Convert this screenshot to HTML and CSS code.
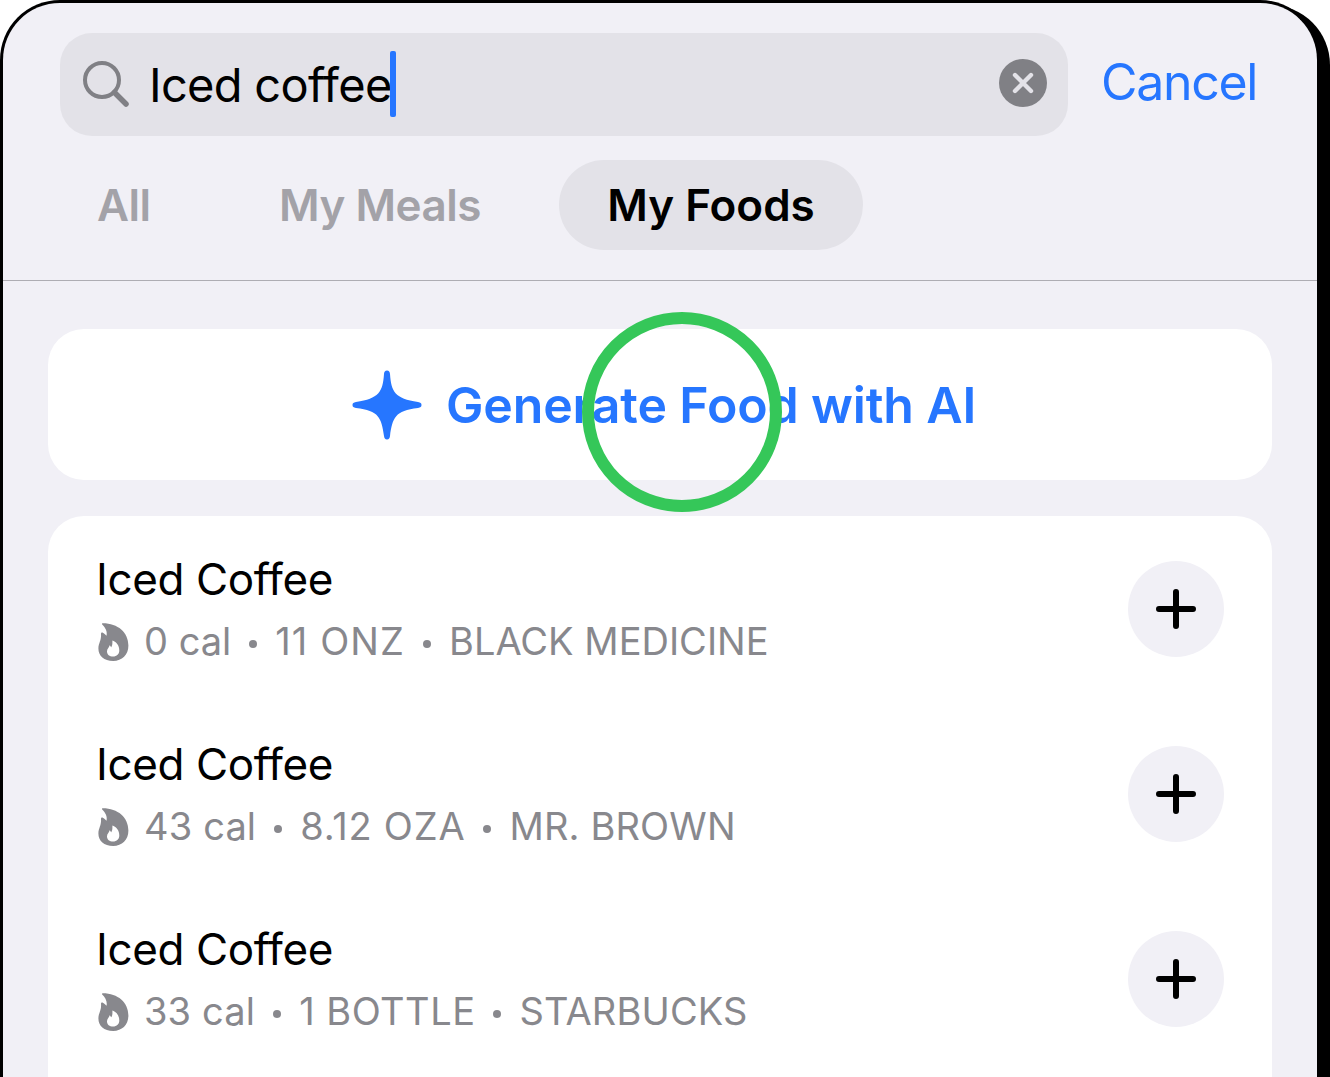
FILE: index.html
```html
<!DOCTYPE html>
<html lang="en">
<head>
<meta charset="utf-8">
<title>Food search</title>
<link rel="stylesheet" href="styles.css">
</head>
<body>
<svg class="defs" aria-hidden="true">
  <symbol id="flame" viewBox="0 0 31 38">
    <path fill-rule="evenodd" d="M4.8.2C20 .2 30.4 9.5 30.4 22.500C30.400 32 24 37.900 15.200 37.900C6 37.900.4 33 .4 25.500C.4 20 3.600 17.500 3 10.800C3 9.500 4 9.100 4.900 9.700C6.600 10.800 7.500 11.800 8.500 12.800C9.500 9 7.500 4.500 4.200 1.500C3.600.9 4 .2 4.800.2ZM14.600 17.600C14 17.600 15.200 21.500 13.300 24.300C12.600 24.100 12.600 22.500 11.600 22.200C11.300 24.500 9 25.500 9 28.400C9 31.500 11.500 33.400 15 33.400C18.800 33.400 21.300 31 21.300 27.400C21.300 22.800 18.500 19 14.600 17.600Z"/>
  </symbol>
  <symbol id="plus" viewBox="0 0 40 40">
    <path d="M20 3v34M3 20h34" fill="none" stroke="#000" stroke-width="6" stroke-linecap="round"/>
  </symbol>
</svg>
<main class="phone">
  <header class="header">
    <div class="search-row">
      <div class="field">
        <svg class="search-icon" viewBox="0 0 48 48"><circle cx="20" cy="20" r="17" /><path d="M32.500 32.500L44 44"/></svg>
        <span class="query">Iced coffee</span><span class="caret"></span>
        <svg class="clear" viewBox="0 0 48 48"><circle cx="24" cy="24" r="24"/><path d="M16 16l16 16M32 16l-16 16"/></svg>
      </div>
      <a class="cancel">Cancel</a>
    </div>
    <nav class="tabs">
      <a class="tab tab-all">All</a>
      <a class="tab tab-meals">My Meals</a>
      <a class="tab tab-active">My Foods</a>
    </nav>
  </header>
  <section class="content">
    <div class="generate">
      <svg class="spark" viewBox="0 0 70 70"><path d="M35 .5C37 .5 37.800 1.800 38 4C39.300 22 43 28.500 66 32C68.500 32.400 69.500 33.200 69.500 35C69.500 36.800 68.500 37.600 66 38C43 40.500 40.500 48 38 66C37.700 68.200 37 69.500 35 69.500C33 69.500 32.300 68.200 32 66C29.500 48 27 40.500 4 38C1.500 37.600.5 36.800.5 35C.5 33.200 1.500 32.400 4 32C27 28.500 30.700 22 32 4C32.200 1.800 33 .5 35 .5Z"/></svg>
      <span class="generate-label">Generate Food with AI</span>
      <span class="touch"></span>
    </div>
    <ul class="foods">
      <li class="food">
        <div class="info">
          <div class="name">Iced Coffee</div>
          <div class="meta"><svg class="flame"><use href="#flame"/></svg><span class="cal">0 cal</span><i class="dot"></i><span class="size size-ounces">11 ONZ</span><i class="dot"></i><span class="brand">BLACK MEDICINE</span></div>
        </div>
        <div class="add"><svg class="plus"><use href="#plus"/></svg></div>
      </li>
      <li class="food">
        <div class="info">
          <div class="name">Iced Coffee</div>
          <div class="meta"><svg class="flame"><use href="#flame"/></svg><span class="cal cal-wide">43 cal</span><i class="dot"></i><span class="size">8.12 OZA</span><i class="dot"></i><span class="brand brand-wide">MR. BROWN</span></div>
        </div>
        <div class="add"><svg class="plus"><use href="#plus"/></svg></div>
      </li>
      <li class="food">
        <div class="info">
          <div class="name">Iced Coffee</div>
          <div class="meta"><svg class="flame"><use href="#flame"/></svg><span class="cal cal-wide">33 cal</span><i class="dot"></i><span class="size size-bottle">1 BOTTLE</span><i class="dot"></i><span class="brand brand-wide">STARBUCKS</span></div>
        </div>
        <div class="add"><svg class="plus"><use href="#plus"/></svg></div>
      </li>
    </ul>
  </section>
</main>
</body>
</html>
```
FILE: styles.css
```css
* { box-sizing: border-box; }
html, body { height: 100%; }
body {
  margin: 0;
  overflow: hidden;
  background: #fff;
  font-family: Inter, "Liberation Sans", sans-serif;
  color: #000;
}
.defs { display: none; }
.phone {
  display: flex;
  flex-direction: column;
  width: 1320px;
  height: 100%;
  border: 3px solid #000;
  border-bottom: 0;
  border-radius: 60px 60px 0 0;
  background: #f1f0f6;
  box-shadow: 10px 5px 0 #000;
}

.header {
  height: 278px;
  flex-shrink: 0;
  padding: 30px 0 0 57px;
  border-bottom: 1px solid #aeadb3;
}
.search-row { display: flex; align-items: center; }
.field {
  display: flex;
  flex-shrink: 0;
  align-items: center;
  width: 1008px;
  height: 103px;
  padding: 0 21px 0 22px;
  border-radius: 32px;
  background: #e3e2e8;
}
.search-icon {
  width: 48px;
  height: 48px;
  margin-top: -1px;
  fill: none;
  stroke: #808085;
  stroke-width: 4;
}
.search-icon path { stroke-width: 5.500; stroke-linecap: round; }
.query {
  margin-left: 19px;
  font-size: 47px;
  line-height: 60px;
  letter-spacing: -0.7px;
  white-space: nowrap;
}
.caret {
  width: 6px;
  height: 66px;
  margin: -1px 0 0 -2px;
  border-radius: 2px;
  background: #2676ff;
}
.clear { width: 48px; height: 48px; margin-left: auto; margin-top: -3px; fill: #808085; }
.clear path { stroke: #e3e2e8; stroke-width: 4.400; stroke-linecap: round; }
.cancel {
  margin: -5px 0 0 33px;
  font-size: 50px;
  line-height: 60px;
  letter-spacing: -1.300px;
  color: #2676ff;
}
.tabs { display: flex; margin-top: 24px; }
.tab {
  height: 90px;
  font-size: 44px;
  font-weight: 580;
  line-height: 90px;
  color: #a3a2a8;
  white-space: nowrap;
}
.tab-all { width: 181px; padding-left: 37px; letter-spacing: -0.5px; }
.tab-meals { width: 318px; padding-left: 38px; letter-spacing: -0.5px; }
.tab-active {
  width: 304px;
  border-radius: 45px;
  background: #e3e2e8;
  color: #000;
  letter-spacing: 0;
  text-align: center;
}

.content {
  display: flex;
  flex: 1;
  flex-direction: column;
  min-height: 0;
  padding: 48px 45px 0;
}
.generate {
  position: relative;
  display: flex;
  flex-shrink: 0;
  align-items: center;
  height: 151px;
  padding-left: 304px;
  border-radius: 36px;
  background: #fff;
  color: #2676ff;
}
.spark { width: 70px; height: 70px; fill: #2676ff; }
.generate-label {
  margin: 0 0 0 24px;
  font-size: 50px;
  font-weight: 580;
  line-height: 60px;
  letter-spacing: -0.150px;
  white-space: nowrap;
}
.touch {
  position: absolute;
  left: 534px;
  top: -17px;
  width: 200px;
  height: 200px;
  border: 12px solid #35c759;
  border-radius: 50%;
}
.foods {
  flex: 1;
  min-height: 0;
  margin: 36px 0 0;
  padding: 0;
  list-style: none;
  border-radius: 36px 36px 0 0;
  background: #fff;
}
.food { display: flex; align-items: center; height: 185px; padding: 0 48px; }
.info { flex: 1; padding-top: 4px; }
.name { font-size: 44px; line-height: 60px; letter-spacing: -0.4px; }
.meta {
  display: flex;
  align-items: center;
  height: 64px;
  font-size: 38px;
  color: #88888d;
  white-space: nowrap;
}
.flame { width: 31px; height: 38px; margin: 2px 0 0 2px; fill: #88888d; }
.cal { margin-left: 15px; }
.cal-wide { letter-spacing: 0.150px; }
.size { letter-spacing: 0.800px; }
.size-ounces { letter-spacing: 1.100px; }
.size-bottle { letter-spacing: 0.500px; }
.brand-wide { letter-spacing: 0.150px; }
.dot {
  width: 8px;
  height: 8px;
  margin: 6px 18px 0;
  border-radius: 50%;
  background: #88888d;
}
.add {
  display: grid;
  place-items: center;
  width: 96px;
  height: 96px;
  border-radius: 50%;
  background: #f1f0f6;
}
.plus { width: 40px; height: 40px; }
```
